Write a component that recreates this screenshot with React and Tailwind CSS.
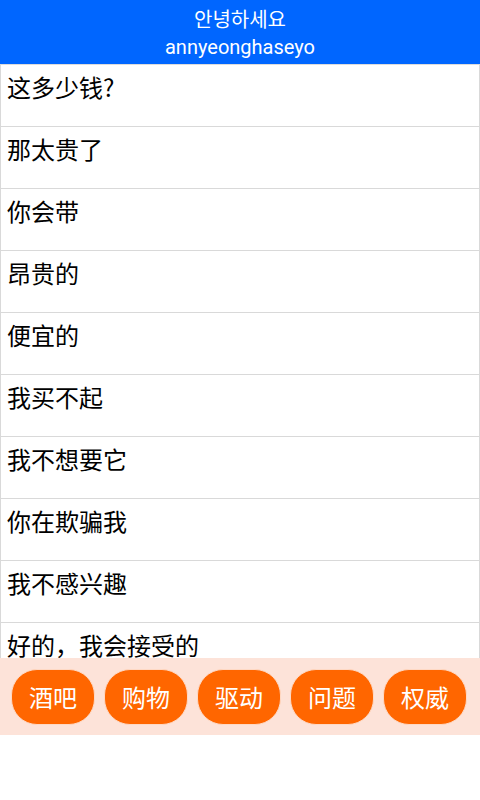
const phrases = [
  '这多少钱?',
  '那太贵了',
  '你会带',
  '昂贵的',
  '便宜的',
  '我买不起',
  '我不想要它',
  '你在欺骗我',
  '我不感兴趣',
  '好的，我会接受的',
]

const tabs = ['酒吧', '购物', '驱动', '问题', '权威']

export default function App() {
  return (
    <div className="w-[480px] h-[800px] bg-white flex flex-col font-['Roboto','Noto_Sans_CJK_SC',sans-serif]">
      {/* header */}
      <div className="h-[64px] bg-[#0066ff] flex flex-col items-center justify-center pt-[3px] text-white text-[20px] leading-[27px] font-['Roboto','Noto_Sans_CJK_KR',sans-serif]">
        <div>안녕하세요</div>
        <div>annyeonghaseyo</div>
      </div>

      {/* phrase list */}
      <div className="h-[594px] overflow-hidden border-t border-[#dcdcdc]">
        {phrases.map((p) => (
          <div
            key={p}
            className="h-[62px] border-x border-b border-[#d9d9d9] px-[6px] pt-[6px] text-[24px] leading-[32px] text-black font-['Noto_Sans_CJK_SC',sans-serif]"
          >
            {p}
          </div>
        ))}
      </div>

      {/* category bar */}
      <div className="h-[77px] bg-[#fde3d9] flex items-center gap-[9px] px-[11px]">
        {tabs.map((t) => (
          <button
            key={t}
            className="w-[84px] h-[56px] rounded-[26px] bg-[#ff6600] border border-[#ffd9c4] text-white text-[24px] font-['Noto_Sans_CJK_SC',sans-serif]"
          >
            {t}
          </button>
        ))}
      </div>
    </div>
  )
}
